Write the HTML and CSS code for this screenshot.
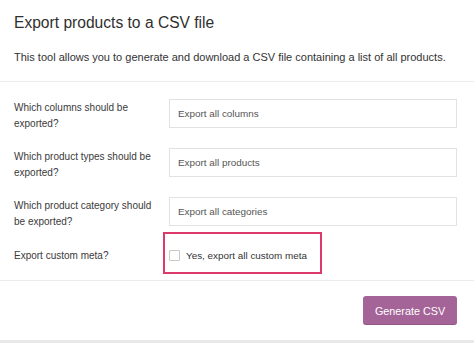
FILE: index.html
```html
<!DOCTYPE html>
<html>
<head>
<meta charset="utf-8">
<link rel="stylesheet" href="styles.css">
</head>
<body>
<div class="page">
  <header class="intro">
    <h1 class="title">Export products to a CSV file</h1>
    <p class="lead">This tool allows you to generate and download a CSV file containing a list of all products.</p>
  </header>
  <section class="form">
    <div class="row">
      <div class="label">Which columns should be<br>exported?</div>
      <div class="field">Export all columns</div>
    </div>
    <div class="row">
      <div class="label">Which product types should be<br>exported?</div>
      <div class="field">Export all products</div>
    </div>
    <div class="row">
      <div class="label">Which product category should<br>be exported?</div>
      <div class="field">Export all categories</div>
    </div>
    <div class="row row-meta">
      <div class="label">Export custom meta?</div>
      <div class="highlight">
        <span class="checkbox"></span>
        <span class="check-text">Yes, export all custom meta</span>
      </div>
    </div>
  </section>
  <footer class="actions">
    <div class="button">Generate CSV</div>
  </footer>
  <div class="strip"></div>
</div>
</body>
</html>
```
FILE: styles.css
```css
html, body {
  margin: 0;
  padding: 0;
  background: #ffffff;
}
body {
  font-family: "Liberation Sans", Arial, sans-serif;
  color: #333333;
  width: 474px;
  height: 343px;
  overflow: hidden;
}
.page {
  display: flex;
  flex-direction: column;
}
.intro {
  padding: 13px 17px 0 14px;
  height: 68px;
  border-bottom: 1px solid #ececec;
}
.title {
  margin: 0;
  font-size: 15.6px;
  line-height: 20px;
  font-weight: 400;
  color: #2f2f2f;
}
.lead {
  margin: 17px 0 0;
  font-size: 11px;
  line-height: 14px;
  color: #333333;
}
.form {
  display: flex;
  flex-direction: column;
  gap: 20px;
  padding: 17px 17px 6px 14px;
  border-bottom: 1px solid #ececec;
}
.row {
  display: flex;
  align-items: center;
  height: 29px;
}
.row-meta {
  margin-top: -14px;
  height: 42px;
}
.label {
  width: 155px;
  flex: none;
  font-size: 10px;
  line-height: 16px;
  color: #3a3a3a;
  padding-top: 4px;
}
.row-meta .label {
  padding-top: 5px;
}
.field {
  flex: 1;
  height: 27px;
  border: 1px solid #e2e2e2;
  display: flex;
  align-items: center;
  padding-left: 8px;
  font-size: 9.9px;
  color: #555555;
}
.highlight {
  box-sizing: border-box;
  margin-left: -6px;
  width: 159px;
  height: 42px;
  border: 2px solid #dc3a6a;
  padding: 5px 0 0 4px;
  display: flex;
  align-items: center;
  gap: 6px;
}
.checkbox {
  width: 9px;
  height: 9px;
  border: 1px solid #c8c8c8;
  border-radius: 1px;
  background: #ffffff;
  flex: none;
}
.check-text {
  font-size: 9.9px;
  color: #333333;
}
.actions {
  display: flex;
  justify-content: flex-end;
  padding: 15px 17px 15px 14px;
}
.button {
  width: 94px;
  height: 29px;
  border-radius: 3px;
  background: #a46497;
  color: #ffffff;
  font-size: 10.8px;
  display: flex;
  align-items: center;
  justify-content: center;
  box-shadow: inset 0 -1px 0 rgba(0,0,0,0.12);
}
.strip {
  height: 4px;
  background: #e9e9e9;
}
```
